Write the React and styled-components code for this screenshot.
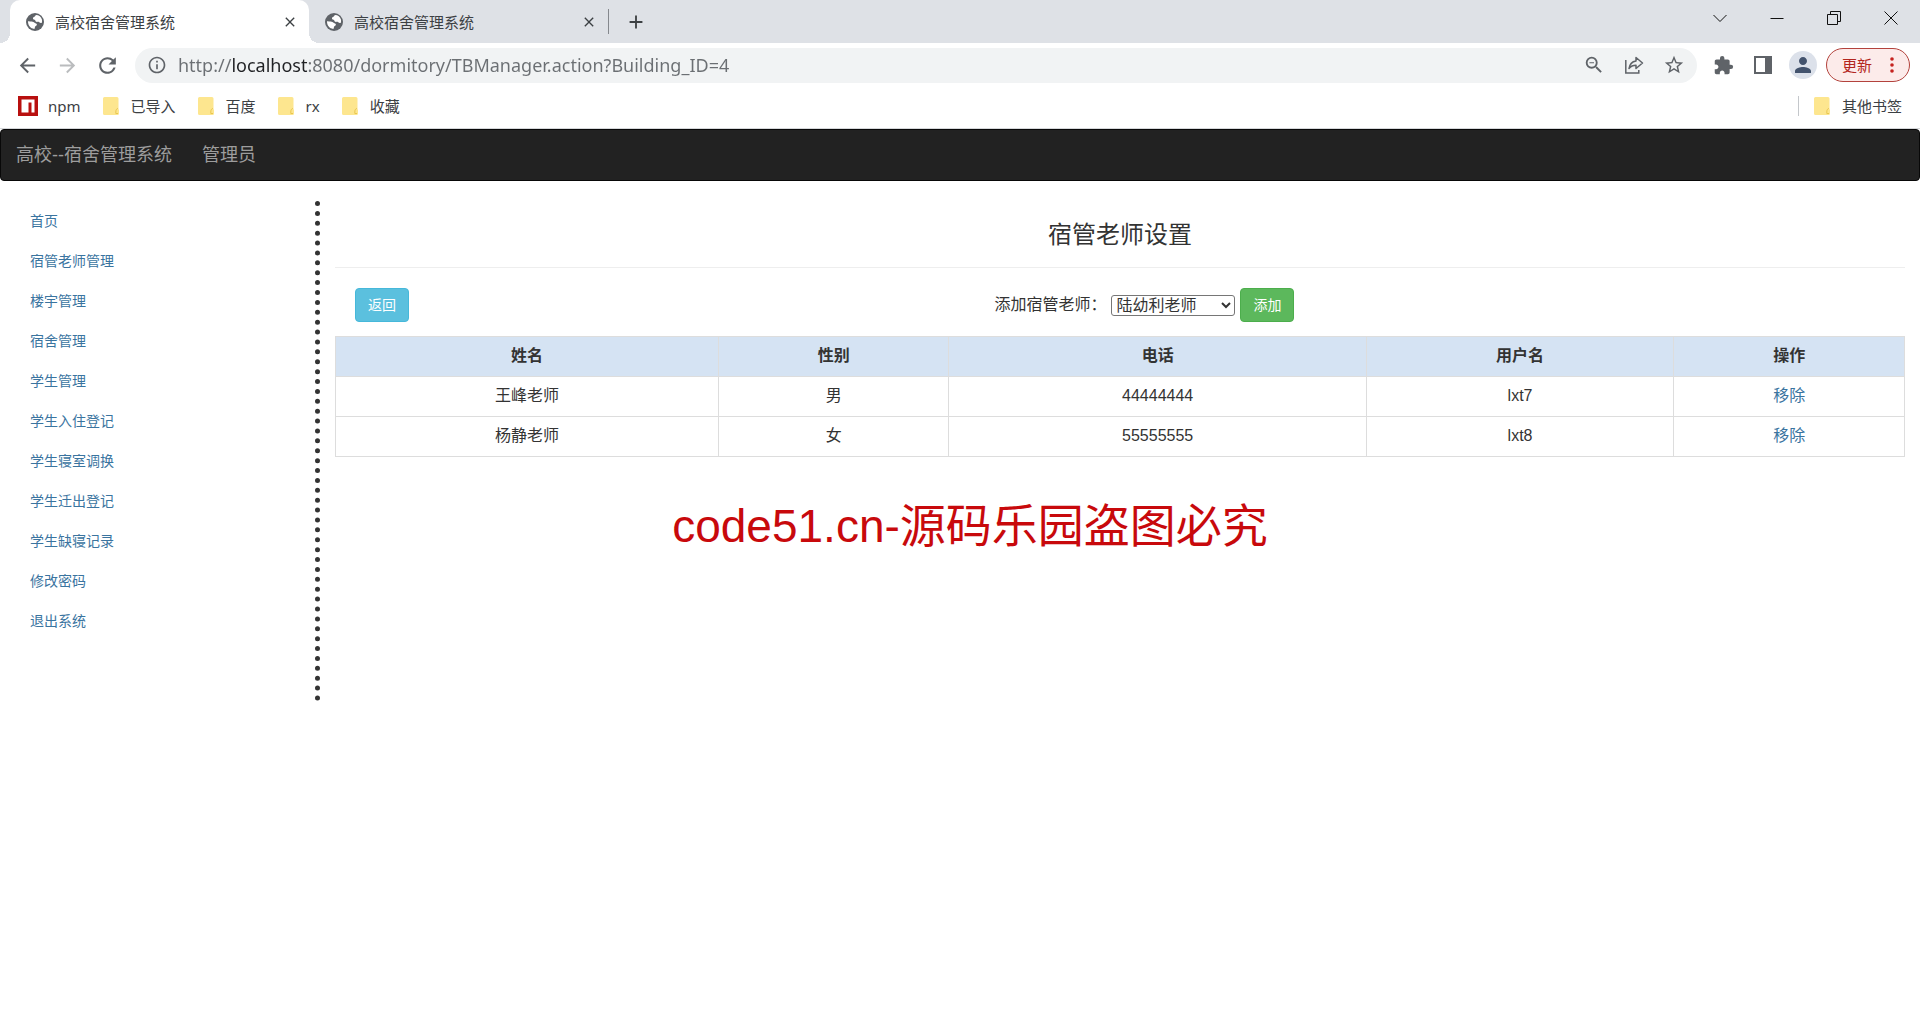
import React from "react";
import styled, { createGlobalStyle } from "styled-components";
import {
  MdArrowBack,
  MdArrowForward,
  MdClose,
  MdExtension,
  MdInfoOutline,
  MdPerson,
  MdRefresh,
  MdStarBorder,
  MdZoomOut,
  MdAdd,
} from "react-icons/md";

const GlobalStyle = createGlobalStyle`
  *, *::before, *::after { box-sizing: border-box; }
  body {
    margin: 0;
    background: #fff;
    color: #333;
    font-family: "Liberation Sans", "Noto Sans CJK SC", sans-serif;
    font-size: 16px;
    line-height: 22px;
  }
  button, input, select { font: inherit; color: inherit; }
  a { color: #3a749f; text-decoration: none; }
`;

const uiFont = `"Noto Sans", "Noto Sans CJK SC", sans-serif`;

const Chrome = styled.header`
  font-family: ${uiFont};
  font-size: 15px;
  line-height: 20px;
  color: #3c4043;
`;

const TabStrip = styled.div`
  display: flex;
  align-items: stretch;
  height: 43px;
  padding-left: 10px;
  background: #dee1e6;
`;

const Tab = styled.div`
  position: relative;
  display: flex;
  align-items: center;
  gap: 11px;
  width: 299px;
  padding: 0 11px 0 16px;
  border-radius: 10px 10px 0 0;
  background: ${(p) => (p.$active ? "#fff" : "transparent")};

  &::before, &::after {
    content: "";
    display: ${(p) => (p.$active ? "block" : "none")};
    position: absolute;
    bottom: 0;
    width: 10px;
    height: 10px;
  }
  &::before {
    left: -10px;
    background: radial-gradient(circle at 0 0, transparent 10px, #fff 10px);
  }
  &::after {
    right: -10px;
    background: radial-gradient(circle at 100% 0, transparent 10px, #fff 10px);
  }
`;

const TabTitle = styled.span`
  flex: 1;
  white-space: nowrap;
`;

const IconButton = styled.button`
  display: flex;
  align-items: center;
  justify-content: center;
  flex: none;
  width: ${(p) => p.$width || 40}px;
  height: 36px;
  padding: 0;
  border: 0;
  background: none;
  color: ${(p) => p.$color || "#5f6368"};
`;

const NewTab = styled.div`
  display: flex;
  align-items: center;
  align-self: center;
  height: 25px;
  padding-left: 7px;
  border-left: 1px solid #85888d;
`;

const WindowControls = styled.div`
  display: flex;
  margin-left: auto;
  padding-right: 1px;
`;

const Toolbar = styled.div`
  display: flex;
  align-items: center;
  height: 44px;
  padding: 0 10px 0 7px;
`;

const Omnibox = styled.div`
  display: flex;
  align-items: center;
  flex: 1;
  height: 35px;
  margin: 0 6px 0 8px;
  padding: 0 3px 0 12px;
  border-radius: 18px;
  background: #f1f3f4;
  color: #5f6368;
`;

const Address = styled.input`
  flex: 1;
  min-width: 0;
  height: 30px;
  margin-left: 11px;
  padding: 0;
  border: 0;
  outline: 0;
  font-size: 18px;
  background: linear-gradient(to right, #6b6f73 54px, #202124 54px, #202124 129px, #6b6f73 129px);
  background-clip: text;
  -webkit-background-clip: text;
  color: transparent;
`;

const Avatar = styled.span`
  display: flex;
  align-items: center;
  justify-content: center;
  width: 28px;
  height: 28px;
  border-radius: 50%;
  background: #dce1ea;
  color: #43536d;
`;

const UpdateButton = styled.button`
  display: flex;
  align-items: center;
  justify-content: space-between;
  width: 84px;
  height: 34px;
  margin-left: 3px;
  padding: 0 15px 0 15px;
  border: 1px solid #b3423c;
  border-radius: 17px;
  background: #fcebea;
  color: #b3261e;
`;

const Bookmarks = styled.nav`
  display: flex;
  align-items: center;
  gap: 22px;
  height: 42px;
  padding: 0 18px 3px 18px;
  border-bottom: 1px solid #d5d7da;
`;

const Bookmark = styled.a`
  display: flex;
  align-items: center;
  gap: ${(p) => p.$gap || 12}px;
  color: #3c4043;
  white-space: nowrap;
`;

const OtherBookmarks = styled.div`
  display: flex;
  margin-left: auto;
  padding-left: 15px;
  border-left: 1px solid #c4c7cb;
`;

const Navbar = styled.nav`
  display: flex;
  align-items: center;
  gap: 30px;
  min-height: 52px;
  margin-bottom: 20px;
  padding: 0 15px;
  border: 1px solid #080808;
  border-radius: 4px;
  background: #222;
`;

const NavbarLink = styled.a`
  color: #9d9d9d;
  font-size: 18px;
  line-height: 20px;
`;

const Columns = styled.div`
  position: relative;
  display: grid;
  grid-template-columns: 1fr 5fr;
`;

const Sidebar = styled.nav`
  display: flex;
  flex-direction: column;
  min-height: 500px;
  padding: 0 15px;
  border-right: 5px dotted #333;
`;

const SidebarLink = styled.a`
  padding: 10px 15px;
  font-size: 14px;
  line-height: 20px;
`;

const Main = styled.main`
  padding: 0 15px;
`;

const Title = styled.h3`
  margin: 20px 0 18px;
  font-size: 24px;
  font-weight: 400;
  line-height: 28px;
  text-align: center;
`;

const Actions = styled.div`
  display: grid;
  grid-template-columns: 42% 1fr;
  align-items: center;
  margin-bottom: 14px;
  padding-top: 20px;
  border-top: 1px solid #eee;
`;

const BackCell = styled.div`
  padding-left: 20px;
`;

const AddForm = styled.form`
  display: flex;
  align-items: center;
  gap: 5px;
`;

const Button = styled.button`
  padding: 6px 12px;
  border: 1px solid ${(p) => (p.$kind === "success" ? "#4cae4c" : "#46b8da")};
  border-radius: 4px;
  background: ${(p) => (p.$kind === "success" ? "#5cb85c" : "#5bc0de")};
  color: #fff;
  font-size: 14px;
  line-height: 20px;
`;

const TeacherSelect = styled.select`
  width: 124px;
  height: 21px;
  padding: 0;
  border: 1px solid #767676;
  border-radius: 3px;
  background: #fff;
  color: #333;
  line-height: 19px;
`;

const Table = styled.table`
  width: 100%;
  border-collapse: collapse;
  table-layout: fixed;
  text-align: center;

  th, td {
    height: 40px;
    padding: 7px 8px 9px;
    border: 1px solid #ddd;
  }
  th { background: #d5e3f3; }
`;

const Column = styled.col`
  width: ${(p) => p.$share}%;
`;

const Watermark = styled.p`
  position: absolute;
  top: 292px;
  left: 0;
  right: 0;
  margin: 0;
  padding-left: 20px;
  color: #c8090c;
  font-size: 46px;
  line-height: 66px;
  text-align: center;
  white-space: nowrap;
  pointer-events: none;
`;

const GlobeIcon = () => (
  <svg width="18" height="18" viewBox="0 0 18 18" aria-hidden="true">
    <circle cx="9" cy="9" r="9" fill="#5f6368" />
    <path d="M10 2C13 2 15.200 4 16 6.800c.2 1.200.1 2.400-.3 3.200-1 .3-1.900 0-2.700-.9-.8-.9-1.700.2-2.800-.3-1.200-.5-.5-1.700-1.700-2-1-.3-1.700-.6-1.500-1.800.2-1 1.300-.9 1.800-1.500.4-.4.400-1 1.200-1.500z" fill="#fff" />
    <path d="M2 8.300c2.300.4 4.700-.4 6.200 1.100 1 1 2.600.7 2.700 2 .1 1.400-1.500 1.300-1.900 2.400-.3.900.1 1.700-.8 2.100C4.700 15.600 1.900 12.500 2 8.300z" fill="#fff" />
  </svg>
);

const FolderIcon = () => (
  <svg width="16" height="18" viewBox="0 0 16 18" aria-hidden="true">
    <path d="M1.500 0H14a1.500 1.500 0 0 1 1.500 1.500V12l.5 1v3.500a1.500 1.500 0 0 1-1.500 1.500H1.500A1.500 1.500 0 0 1 0 16.500v-15A1.500 1.500 0 0 1 1.500 0z" fill="#fde68f" />
    <path d="M15 11.500c-1.200 0-2.200 1.200-2.200 3.500v1.500H15" fill="none" stroke="#e9c64f" />
  </svg>
);

const NpmIcon = () => (
  <svg width="20" height="20" viewBox="0 0 20 20" aria-hidden="true">
    <path d="M0 0h20v20H0z" fill="#b8100f" />
    <path d="M3.500 3.500h13v13h-3v-10h-3v10h-7z" fill="#fff" />
  </svg>
);

const ShareIcon = () => (
  <svg width="20" height="20" viewBox="0 0 20 20" fill="none" stroke="currentColor" strokeWidth="1.500" aria-hidden="true">
    <path d="M1.800 5v13h13v-3" />
    <path d="M12 2.500 18.500 8 12 13.500v-3.200c-3.200 0-5.200.9-7 3.200.6-4 2.800-7 7-7.600z" strokeLinejoin="round" />
  </svg>
);

const SidePanelIcon = () => (
  <svg width="18" height="18" viewBox="0 0 18 18" aria-hidden="true">
    <path d="M1 1h16v16H1z" fill="none" stroke="currentColor" strokeWidth="2" />
    <path d="M11 1h6v16h-6z" fill="currentColor" />
  </svg>
);

const WindowIcon = ({ d }) => (
  <svg width="14" height="14" viewBox="0 0 14 14" fill="none" stroke="#111" aria-hidden="true">
    <path d={d} />
  </svg>
);

const DotsIcon = () => (
  <svg width="4" height="16" viewBox="0 0 4 16" fill="#c5221f" aria-hidden="true">
    <circle cx="2" cy="2" r="1.800" />
    <circle cx="2" cy="8" r="1.800" />
    <circle cx="2" cy="14" r="1.800" />
  </svg>
);

const windowControls = [
  ["搜索标签页", "M.5 4l6.500 6.500L13.500 4"],
  ["最小化", "M.5 7.500h13"],
  ["还原", "M.5 3.500h10v10H.5zM3.500 3.500v-3h10v10h-3"],
  ["关闭", "M.5.5l13 13M13.500.5l-13 13"],
];
const folders = ["已导入", "百度", "rx", "收藏"];
const menu = [
  "首页", "宿管老师管理", "楼宇管理", "宿舍管理", "学生管理", "学生入住登记",
  "学生寝室调换", "学生迁出登记", "学生缺寝记录", "修改密码", "退出系统",
];
const columns = [
  ["姓名", 24.4], ["性别", 14.7], ["电话", 26.6], ["用户名", 19.6], ["操作", 14.7],
];
const teachers = [
  ["王峰老师", "男", "44444444", "lxt7"],
  ["杨静老师", "女", "55555555", "lxt8"],
];

function BrowserTab({ active }) {
  return (
    <Tab $active={active}>
      <GlobeIcon />
      <TabTitle>高校宿舍管理系统</TabTitle>
      <IconButton $width={16} $color="#3c4043" aria-label="关闭标签页">
        <MdClose size={16} />
      </IconButton>
    </Tab>
  );
}

function Browser() {
  return (
    <Chrome>
      <TabStrip>
        <BrowserTab active />
        <BrowserTab />
        <NewTab>
          <IconButton $color="#3c4043" aria-label="新标签页"><MdAdd size={22} /></IconButton>
        </NewTab>
        <WindowControls>
          {windowControls.map(([label, d]) => (
            <IconButton key={label} $width={57} aria-label={label}><WindowIcon d={d} /></IconButton>
          ))}
        </WindowControls>
      </TabStrip>
      <Toolbar>
        <IconButton aria-label="后退"><MdArrowBack size={23} /></IconButton>
        <IconButton $color="#babcbe" aria-label="前进"><MdArrowForward size={23} /></IconButton>
        <IconButton aria-label="刷新"><MdRefresh size={25} /></IconButton>
        <Omnibox>
          <MdInfoOutline size={20} />
          <Address
            aria-label="地址"
            spellCheck={false}
            defaultValue="http://localhost:8080/dormitory/TBManager.action?Building_ID=4"
          />
          <IconButton aria-label="缩放"><MdZoomOut size={22} /></IconButton>
          <IconButton aria-label="分享"><ShareIcon /></IconButton>
          <IconButton aria-label="收藏此页"><MdStarBorder size={22} /></IconButton>
        </Omnibox>
        <IconButton aria-label="扩展程序"><MdExtension size={21} /></IconButton>
        <IconButton aria-label="侧边栏"><SidePanelIcon /></IconButton>
        <IconButton aria-label="用户"><Avatar><MdPerson size={24} /></Avatar></IconButton>
        <UpdateButton>更新<DotsIcon /></UpdateButton>
      </Toolbar>
      <Bookmarks>
        <Bookmark href="#" $gap={10}><NpmIcon />npm</Bookmark>
        {folders.map((name) => (
          <Bookmark key={name} href="#"><FolderIcon />{name}</Bookmark>
        ))}
        <OtherBookmarks>
          <Bookmark href="#"><FolderIcon />其他书签</Bookmark>
        </OtherBookmarks>
      </Bookmarks>
    </Chrome>
  );
}

export default function App() {
  return (
    <>
      <GlobalStyle />
      <Browser />
      <Navbar>
        <NavbarLink href="#">高校--宿舍管理系统</NavbarLink>
        <NavbarLink href="#">管理员</NavbarLink>
      </Navbar>
      <Columns>
        <Sidebar>
          {menu.map((item) => <SidebarLink key={item} href="#">{item}</SidebarLink>)}
        </Sidebar>
        <Main>
          <Title>宿管老师设置</Title>
          <Actions>
            <BackCell><Button type="button">返回</Button></BackCell>
            <AddForm onSubmit={(e) => e.preventDefault()}>
              <label htmlFor="teacher">添加宿管老师：</label>
              <TeacherSelect id="teacher"><option>陆幼利老师</option></TeacherSelect>
              <Button $kind="success">添加</Button>
            </AddForm>
          </Actions>
          <Table>
            <colgroup>
              {columns.map(([name, share]) => <Column key={name} $share={share} />)}
            </colgroup>
            <thead>
              <tr>{columns.map(([name]) => <th key={name}>{name}</th>)}</tr>
            </thead>
            <tbody>
              {teachers.map((row) => (
                <tr key={row[0]}>
                  {row.map((cell) => <td key={cell}>{cell}</td>)}
                  <td><a href="#">移除</a></td>
                </tr>
              ))}
            </tbody>
          </Table>
        </Main>
        <Watermark>code51.cn-源码乐园盗图必究</Watermark>
      </Columns>
    </>
  );
}
